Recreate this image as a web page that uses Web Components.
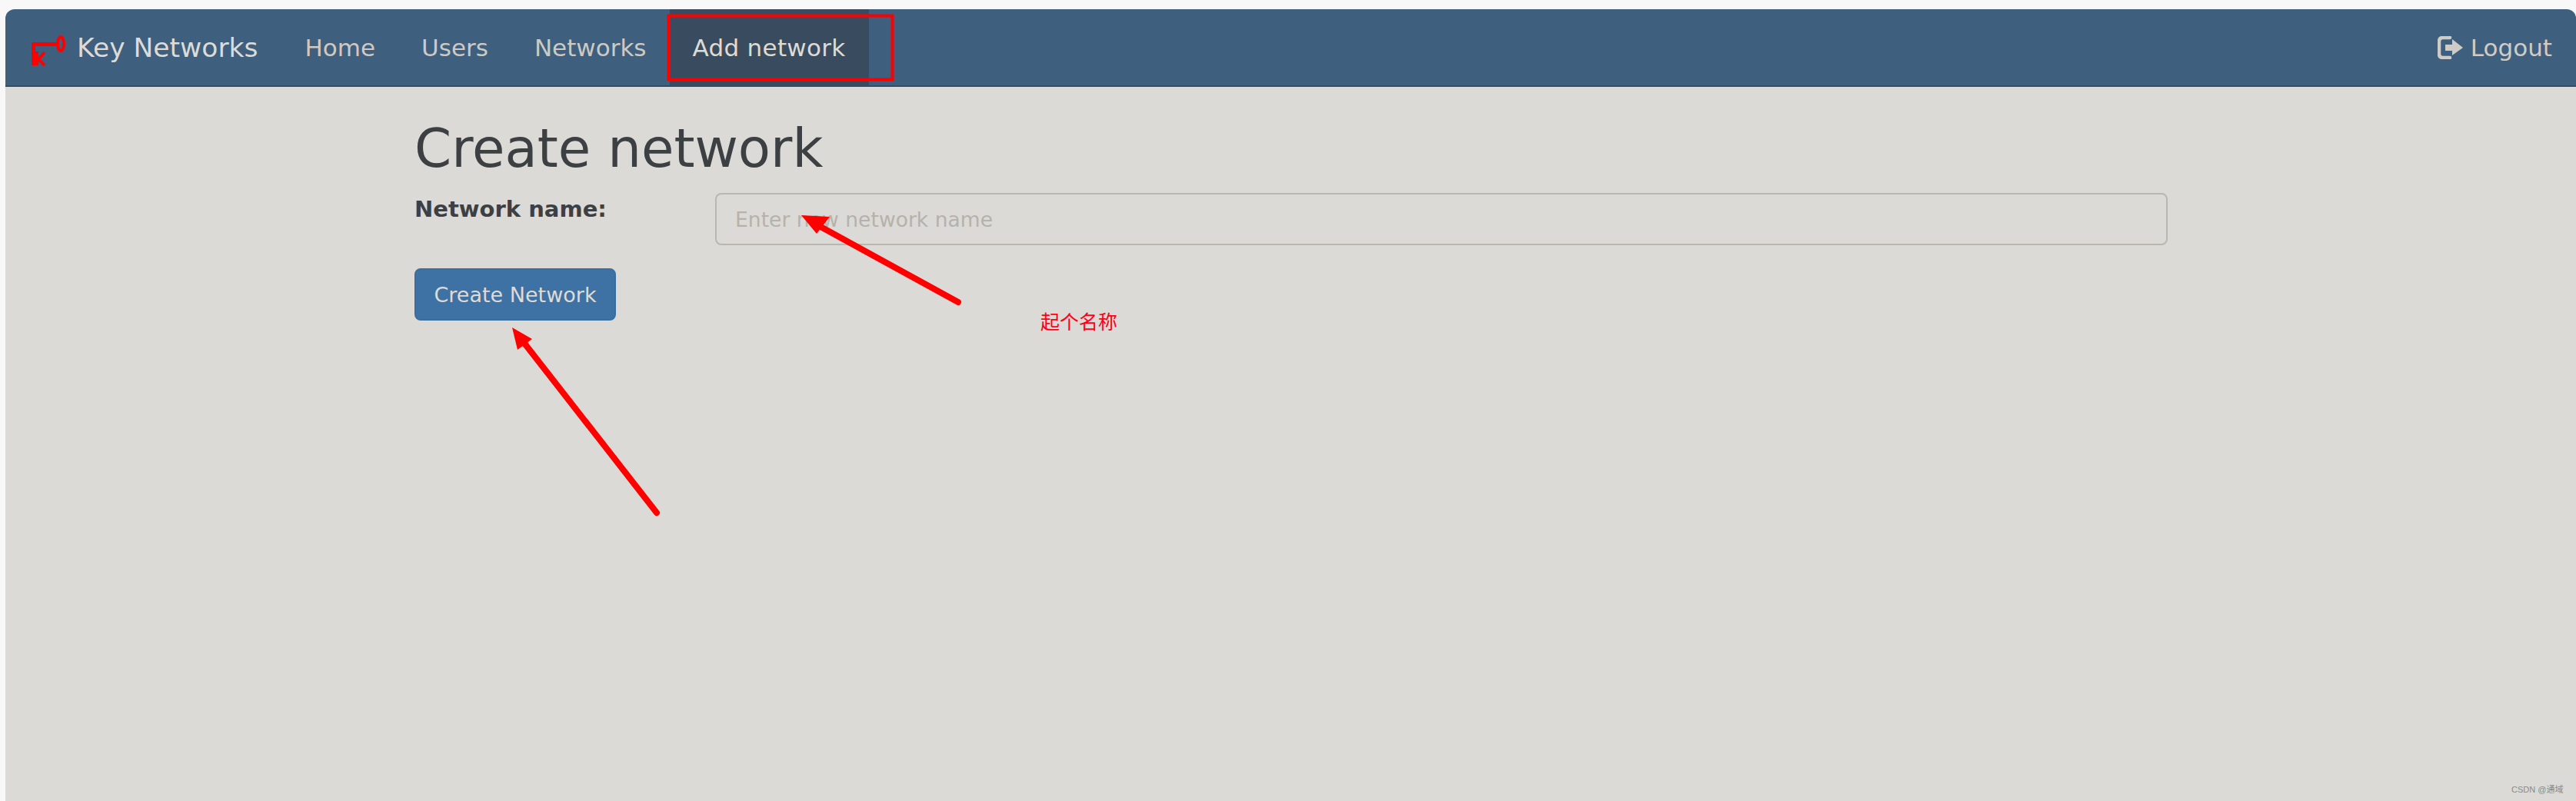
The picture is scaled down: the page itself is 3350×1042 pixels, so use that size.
<!DOCTYPE html>
<html lang="en">
<head>
<meta charset="utf-8">
<title>Create network</title>
<style>
  html, body { margin: 0; padding: 0; height: 100%; }
  body {
    background: #f8f8f8;
    font-family: "DejaVu Sans", sans-serif;
    overflow: hidden;
  }
</style>
</head>
<body>
<app-page>
  <top-bar slot="bar">
    <nav-link>Home</nav-link>
    <nav-link>Users</nav-link>
    <nav-link>Networks</nav-link>
    <nav-link active>Add network</nav-link>
  </top-bar>
  <network-form></network-form>
</app-page>
<mark-up></mark-up>

<script>
class AppPage extends HTMLElement {
  constructor() {
    super();
    this.attachShadow({ mode: "open" });
  }

  connectedCallback() {
    this.shadowRoot.innerHTML = /* html */ `
      <style>
        :host {
          display: flex;
          flex-direction: column;
          box-sizing: border-box;
          width: 3350px;
          height: 1042px;
          padding: 12px 0 0 7px;
        }
        .body {
          flex: 1;
          background: #dbdad6;
          padding: 0 531px 0 532px;
        }
      </style>
      <slot name="bar"></slot>
      <div class="body"><slot></slot></div>
    `;
  }
}

class TopBar extends HTMLElement {
  constructor() {
    super();
    this.attachShadow({ mode: "open" });
  }

  connectedCallback() {
    this.shadowRoot.innerHTML = /* html */ `
      <style>
        :host {
          display: flex;
          box-sizing: border-box;
          height: 101px;
          background: #3f5f7e;
          border-bottom: 2px solid #3a4a5a;
          border-radius: 12px 12px 0 0;
          padding: 0 31px 0 33px;
          font-size: 31px;
        }
        .brand {
          display: flex;
          align-items: center;
          gap: 12px;
          margin-right: 31px;
          color: #dddbd6;
          font-size: 34.500px;
        }
        svg { display: block; flex: none; }
        .key { margin-top: 9px; }
        .links { display: flex; }
        .logout {
          margin-left: auto;
          display: flex;
          align-items: center;
          gap: 9px;
          color: #cfccc7;
        }
      </style>
      <div class="brand">
        <svg class="key" width="48" height="42" viewBox="0 0 48 42">
          <path d="M1 10H35V15H6V40H1z" fill="#f00"/>
          <path d="M6 22H10V40H6z" fill="#f00"/>
          <path d="M18 23L10 32L18 40" fill="none" stroke="#f00" stroke-width="4"/>
          <ellipse cx="39" cy="12" rx="4" ry="9" fill="none" stroke="#f00" stroke-width="4"/>
        </svg>
        <span>Key Networks</span>
      </div>
      <div class="links"><slot></slot></div>
      <div class="logout">
        <svg width="34" height="30" viewBox="0 0 34 30">
          <path d="M16 2H7Q2 2 2 7V23Q2 28 7 28H16" fill="none" stroke="currentColor" stroke-width="4.500" stroke-linecap="round"/>
          <path d="M10 11H19V4L33 15L19 25V19H10z" fill="currentColor"/>
        </svg>
        <span>Logout</span>
      </div>
    `;
  }
}

class NavLink extends HTMLElement {
  constructor() {
    super();
    this.attachShadow({ mode: "open" });
  }

  connectedCallback() {
    this.shadowRoot.innerHTML = /* html */ `
      <style>
        :host {
          display: flex;
          align-items: center;
          padding: 0 30px;
          color: #cdcac5;
        }
        :host([active]) {
          background: #394c5f;
          color: #dddbd6;
          letter-spacing: 0.300px;
        }
      </style>
      <slot></slot>
    `;
  }
}

class NetworkForm extends HTMLElement {
  constructor() {
    super();
    this.attachShadow({ mode: "open" });
  }

  connectedCallback() {
    this.shadowRoot.innerHTML = /* html */ `
      <style>
        * { box-sizing: border-box; }
        :host {
          display: block;
          color: #3c4043;
        }
        h1 {
          margin: 0 0 16px;
          padding-top: 38px;
          font-size: 69px;
          font-weight: 400;
          line-height: 84px;
        }
        .row {
          display: flex;
          align-items: flex-start;
          margin-bottom: 30px;
        }
        label {
          width: 391px;
          font-size: 29px;
          font-weight: 700;
          line-height: 40px;
          padding-top: 1px;
        }
        input {
          flex: 1;
          height: 68px;
          margin: 0;
          padding: 0 24px;
          border: 2px solid #b9b7b0;
          border-radius: 8px;
          background: transparent;
          font: 26.600px "DejaVu Sans", sans-serif;
          outline: none;
        }
        input::placeholder { color: #b5b2ab; opacity: 1; }
        button {
          display: block;
          height: 68px;
          width: 262px;
          padding: 0;
          border: 2px solid #3b6d9e;
          border-radius: 8px;
          background: #3e72a5;
          color: #dddbd6;
          font: 27px "DejaVu Sans", sans-serif;
        }
      </style>
      <h1>Create network</h1>
      <div class="row">
        <label>Network name:</label>
        <input type="text" placeholder="Enter new network name">
      </div>
      <button type="button">Create Network</button>
    `;
  }
}

// red annotations drawn over the screenshot
class MarkUp extends HTMLElement {
  constructor() {
    super();
    this.attachShadow({ mode: "open" });
  }

  connectedCallback() {
    this.shadowRoot.innerHTML = /* html */ `
      <style>
        :host {
          position: absolute;
          left: 0;
          top: 0;
          width: 3350px;
          height: 1042px;
          pointer-events: none;
        }
        svg { position: absolute; left: 0; top: 0; }
        .note {
          position: absolute;
          left: 1353px;
          top: 402px;
          color: #ff0015;
          font: 400 25px/30px "Noto Sans CJK SC", sans-serif;
        }
        .mark {
          position: absolute;
          left: 3266px;
          top: 1020px;
          color: #8a8a88;
          font: 11px/14px "Liberation Sans", "Noto Sans CJK SC", sans-serif;
        }
      </style>
      <svg width="3350" height="1042" viewBox="0 0 3350 1042">
        <rect x="869.500" y="20.500" width="291" height="83" fill="none" stroke="#f00" stroke-width="4"/>
        <path d="M1246 393L1060 291" stroke="#f00" stroke-width="8" stroke-linecap="round"/>
        <path d="M1042 280L1079 282L1062 304z" fill="#f00"/>
        <path d="M854 667L680 444" stroke="#f00" stroke-width="8" stroke-linecap="round"/>
        <path d="M666 426L692 441L673 455z" fill="#f00"/>
      </svg>
      <div class="note">起个名称</div>
      <div class="mark">CSDN @通域</div>
    `;
  }
}

customElements.define("app-page", AppPage);
customElements.define("top-bar", TopBar);
customElements.define("nav-link", NavLink);
customElements.define("network-form", NetworkForm);
customElements.define("mark-up", MarkUp);
</script>
</body>
</html>
